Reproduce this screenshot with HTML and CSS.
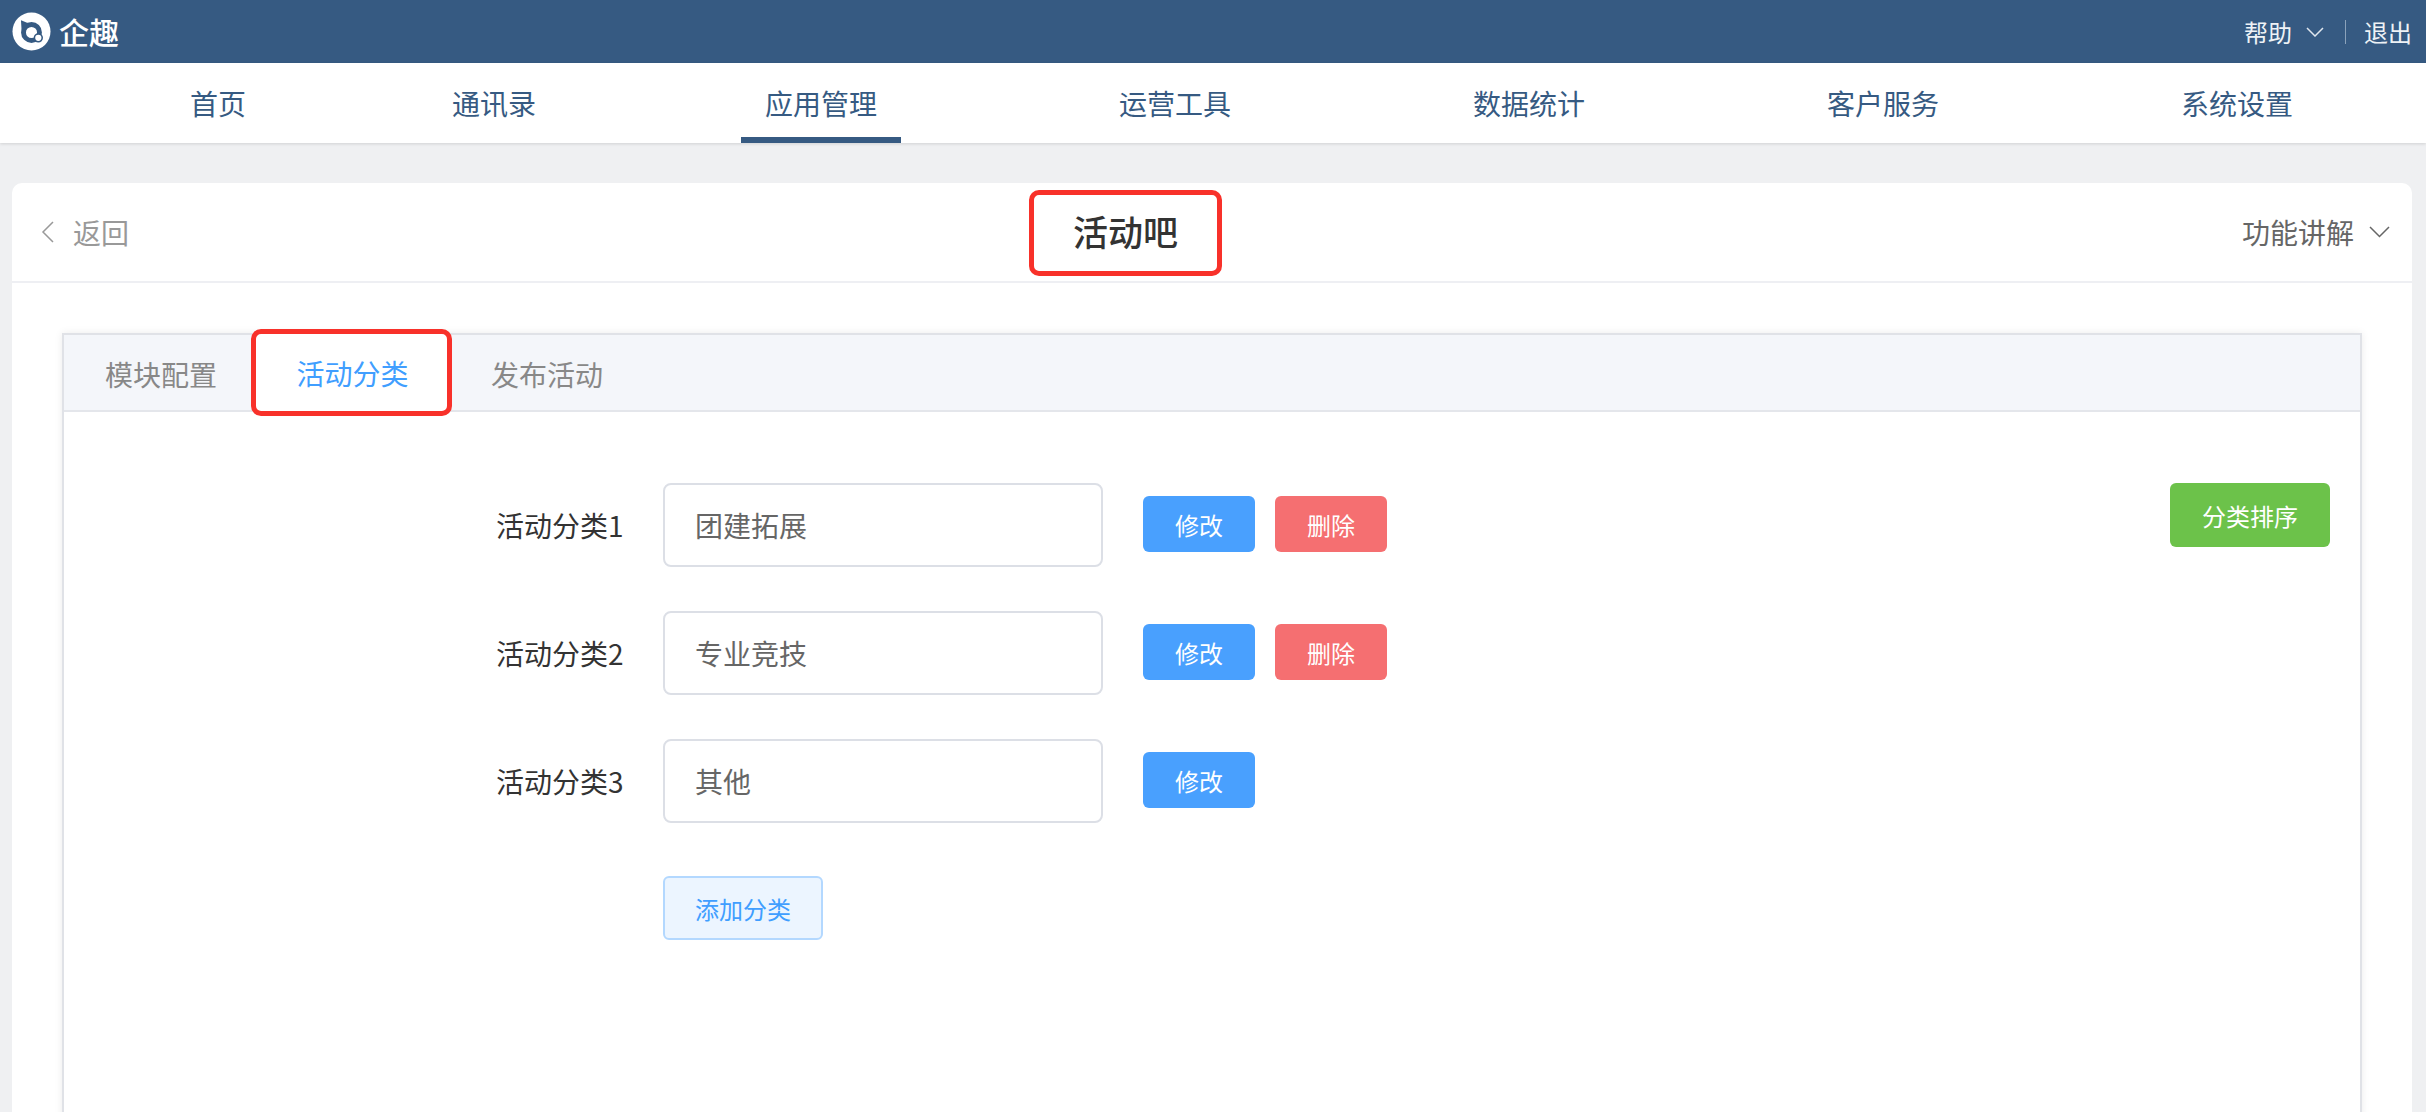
FILE: index.html
```html
<!DOCTYPE html>
<html lang="zh">
<head>
<meta charset="utf-8">
<title>活动吧</title>
<link rel="stylesheet" href="styles.css">
</head>
<body>
<header class="topbar">
  <div class="brand">
    <svg class="logo" viewBox="0 0 40 40" width="39" height="39">
      <circle cx="20" cy="20" r="19.5" fill="#fff"/>
      <circle cx="20" cy="21" r="8.2" fill="none" stroke="#365a82" stroke-width="5"/>
      <path d="M9.2 8.5 L10 22 L18 12 Z" fill="#365a82"/>
      <circle cx="27" cy="26.5" r="4" fill="#fff" stroke="#365a82" stroke-width="1.6"/>
    </svg>
    <span class="brand-name">企趣</span>
  </div>
  <div class="top-actions">
    <span>帮助</span>
    <svg class="chev-top" viewBox="0 0 18 10" width="18" height="10"><path d="M1 1 L9 9 L17 1" fill="none" stroke="#dfe6ee" stroke-width="1.5"/></svg>
    <i class="top-sep"></i>
    <span>退出</span>
  </div>
</header>
<nav class="mainnav">
  <a class="nav-item nav-first">首页</a>
  <a class="nav-item nav-second">通讯录</a>
  <a class="nav-item active">应用管理</a>
  <a class="nav-item">运营工具</a>
  <a class="nav-item">数据统计</a>
  <a class="nav-item">客户服务</a>
  <a class="nav-item">系统设置</a>
</nav>
<main class="card">
  <div class="card-head">
    <div class="back">
      <svg viewBox="0 0 13 22" width="13" height="22"><path d="M12 1 L2 11 L12 21" fill="none" stroke="#999" stroke-width="1.5"/></svg>
      <span>返回</span>
    </div>
    <h1 class="title">活动吧</h1>
    <div class="explain">
      <span>功能讲解</span>
      <svg viewBox="0 0 21 12" width="21" height="12"><path d="M1 1 L10.5 10.5 L20 1" fill="none" stroke="#666" stroke-width="1.5"/></svg>
    </div>
  </div>
  <section class="panel">
    <div class="tabs">
      <span class="tab">模块配置</span>
      <span class="tab current">活动分类</span>
      <span class="tab">发布活动</span>
    </div>
    <div class="panel-body">
      <div class="sort-wrap"><button class="btn btn-green">分类排序</button></div>
      <div class="row">
        <label class="row-label">活动分类1</label>
        <div class="input">团建拓展</div>
        <button class="btn btn-blue">修改</button>
        <button class="btn btn-red">删除</button>
      </div>
      <div class="row">
        <label class="row-label">活动分类2</label>
        <div class="input">专业竞技</div>
        <button class="btn btn-blue">修改</button>
        <button class="btn btn-red">删除</button>
      </div>
      <div class="row">
        <label class="row-label">活动分类3</label>
        <div class="input">其他</div>
        <button class="btn btn-blue">修改</button>
      </div>
      <div class="add-row"><button class="btn-add">添加分类</button></div>
    </div>
  </section>
</main>
</body>
</html>
```
FILE: styles.css
```css
* { box-sizing: border-box; }
html, body { height: 100%; }
body {
  margin: 0;
  height: 1112px;
  overflow: hidden;
  background: #eff0f2;
  font-family: "Noto Sans CJK SC", "Liberation Sans", sans-serif;
  color: #333;
}
.topbar {
  height: 63px;
  background: #365a82;
  display: flex;
  align-items: center;
  justify-content: space-between;
  padding: 0 14px 0 12px;
  color: #fff;
}
.brand { display: flex; align-items: center; gap: 8px; }
.logo { display: block; }
.brand-name { font-size: 30px; font-weight: 500; line-height: 40px; margin-top: -2px; }
.top-actions { display: flex; align-items: center; font-size: 24px; color: #eef2f6; }
.chev-top { margin: 0 21px 0 14px; }
.top-sep { width: 1px; height: 24px; background: #8ba2bb; margin-right: 18px; }
.mainnav {
  height: 80px;
  background: #fff;
  box-shadow: 0 1px 3px rgba(0,0,0,.13);
  display: flex;
  padding-left: 166px;
  gap: 194px;
  position: relative;
}
.nav-item {
  font-size: 28px;
  line-height: 80px;
  color: #365a82;
  text-align: center;
  padding: 0 24px;
  height: 80px;
}
.nav-first { margin-right: -36px; }
.nav-second { margin-right: -13px; }
.nav-item.active { border-bottom: 6px solid #365a82; }
.card {
  margin: 40px 14px 0 12px;
  background: #fff;
  border-radius: 10px 10px 0 0;
  height: 940px;
}
.card-head {
  height: 100px;
  border-bottom: 2px solid #eeeff3;
  display: grid;
  grid-template-columns: 988px 193px 1fr;
  align-items: center;
  padding: 0 22px 0 29px;
}
.back { display: flex; align-items: center; gap: 19px; font-size: 28px; line-height: 40px; color: #999; }
.back svg { display: block; }
.title {
  margin: 0;
  width: 193px;
  height: 86px;
  border: 5px solid #f8312a;
  border-radius: 10px;
  font-size: 35px;
  font-weight: 500;
  line-height: 72px;
  text-align: center;
  color: #333;
  position: relative;
  top: 1px;
}
.explain { display: flex; align-items: center; justify-content: flex-end; gap: 15px; font-size: 28px; line-height: 40px; color: #666; }
.explain svg { display: block; }
.panel {
  margin: 50px 50px 0;
  height: 800px;
  border: 2px solid #e0e2e7;
  box-shadow: 0 0 8px rgba(0,0,0,.08);
}
.tabs {
  height: 77px;
  background: #f4f6fa;
  border-bottom: 2px solid #e4e6eb;
  display: flex;
  align-items: stretch;
  font-size: 28px;
  color: #888;
}
.tab { line-height: 78px; }
.tab:first-child { margin-left: 41px; width: 146px; }
.tab.current {
  width: 201px;
  height: 87px;
  margin: -6px 0 0 0;
  padding-left: 2px;
  border: 5px solid #f8312a;
  border-radius: 10px;
  background: #fff;
  color: #409eff;
  text-align: center;
  line-height: 79px;
  position: relative;
}
.tab:last-child { margin-left: 39px; }
.panel-body { position: relative; padding: 71px 0 0 599px; }
.sort-wrap { position: absolute; top: 71px; right: 30px; }
.row { display: flex; align-items: center; height: 84px; margin-bottom: 44px; }
.row-label { position: absolute; left: 432px; font-size: 28px; color: #333; }
.input {
  width: 440px;
  height: 84px;
  border: 2px solid #dcdfe6;
  border-radius: 8px;
  padding: 0 30px;
  font-size: 28px;
  line-height: 80px;
  color: #666;
  margin-right: 40px;
}
.btn {
  width: 112px;
  height: 56px;
  border: 0;
  border-radius: 6px;
  color: #fff;
  font: 400 24px "Noto Sans CJK SC", "Liberation Sans", sans-serif;
  padding: 0;
}
.row .btn { margin-bottom: 2px; }
.btn + .btn { margin-left: 20px; }
.btn-blue { background: #49a0fe; }
.btn-red { background: #f56f71; }
.btn-green { background: #6cc24a; width: 160px; height: 64px; }
.add-row { padding-top: 9px; }
.btn-add {
  width: 160px;
  height: 64px;
  background: #ecf5ff;
  border: 2px solid #b3d8ff;
  border-radius: 6px;
  color: #409eff;
  font: 400 24px "Noto Sans CJK SC", "Liberation Sans", sans-serif;
  padding: 0;
}
```
